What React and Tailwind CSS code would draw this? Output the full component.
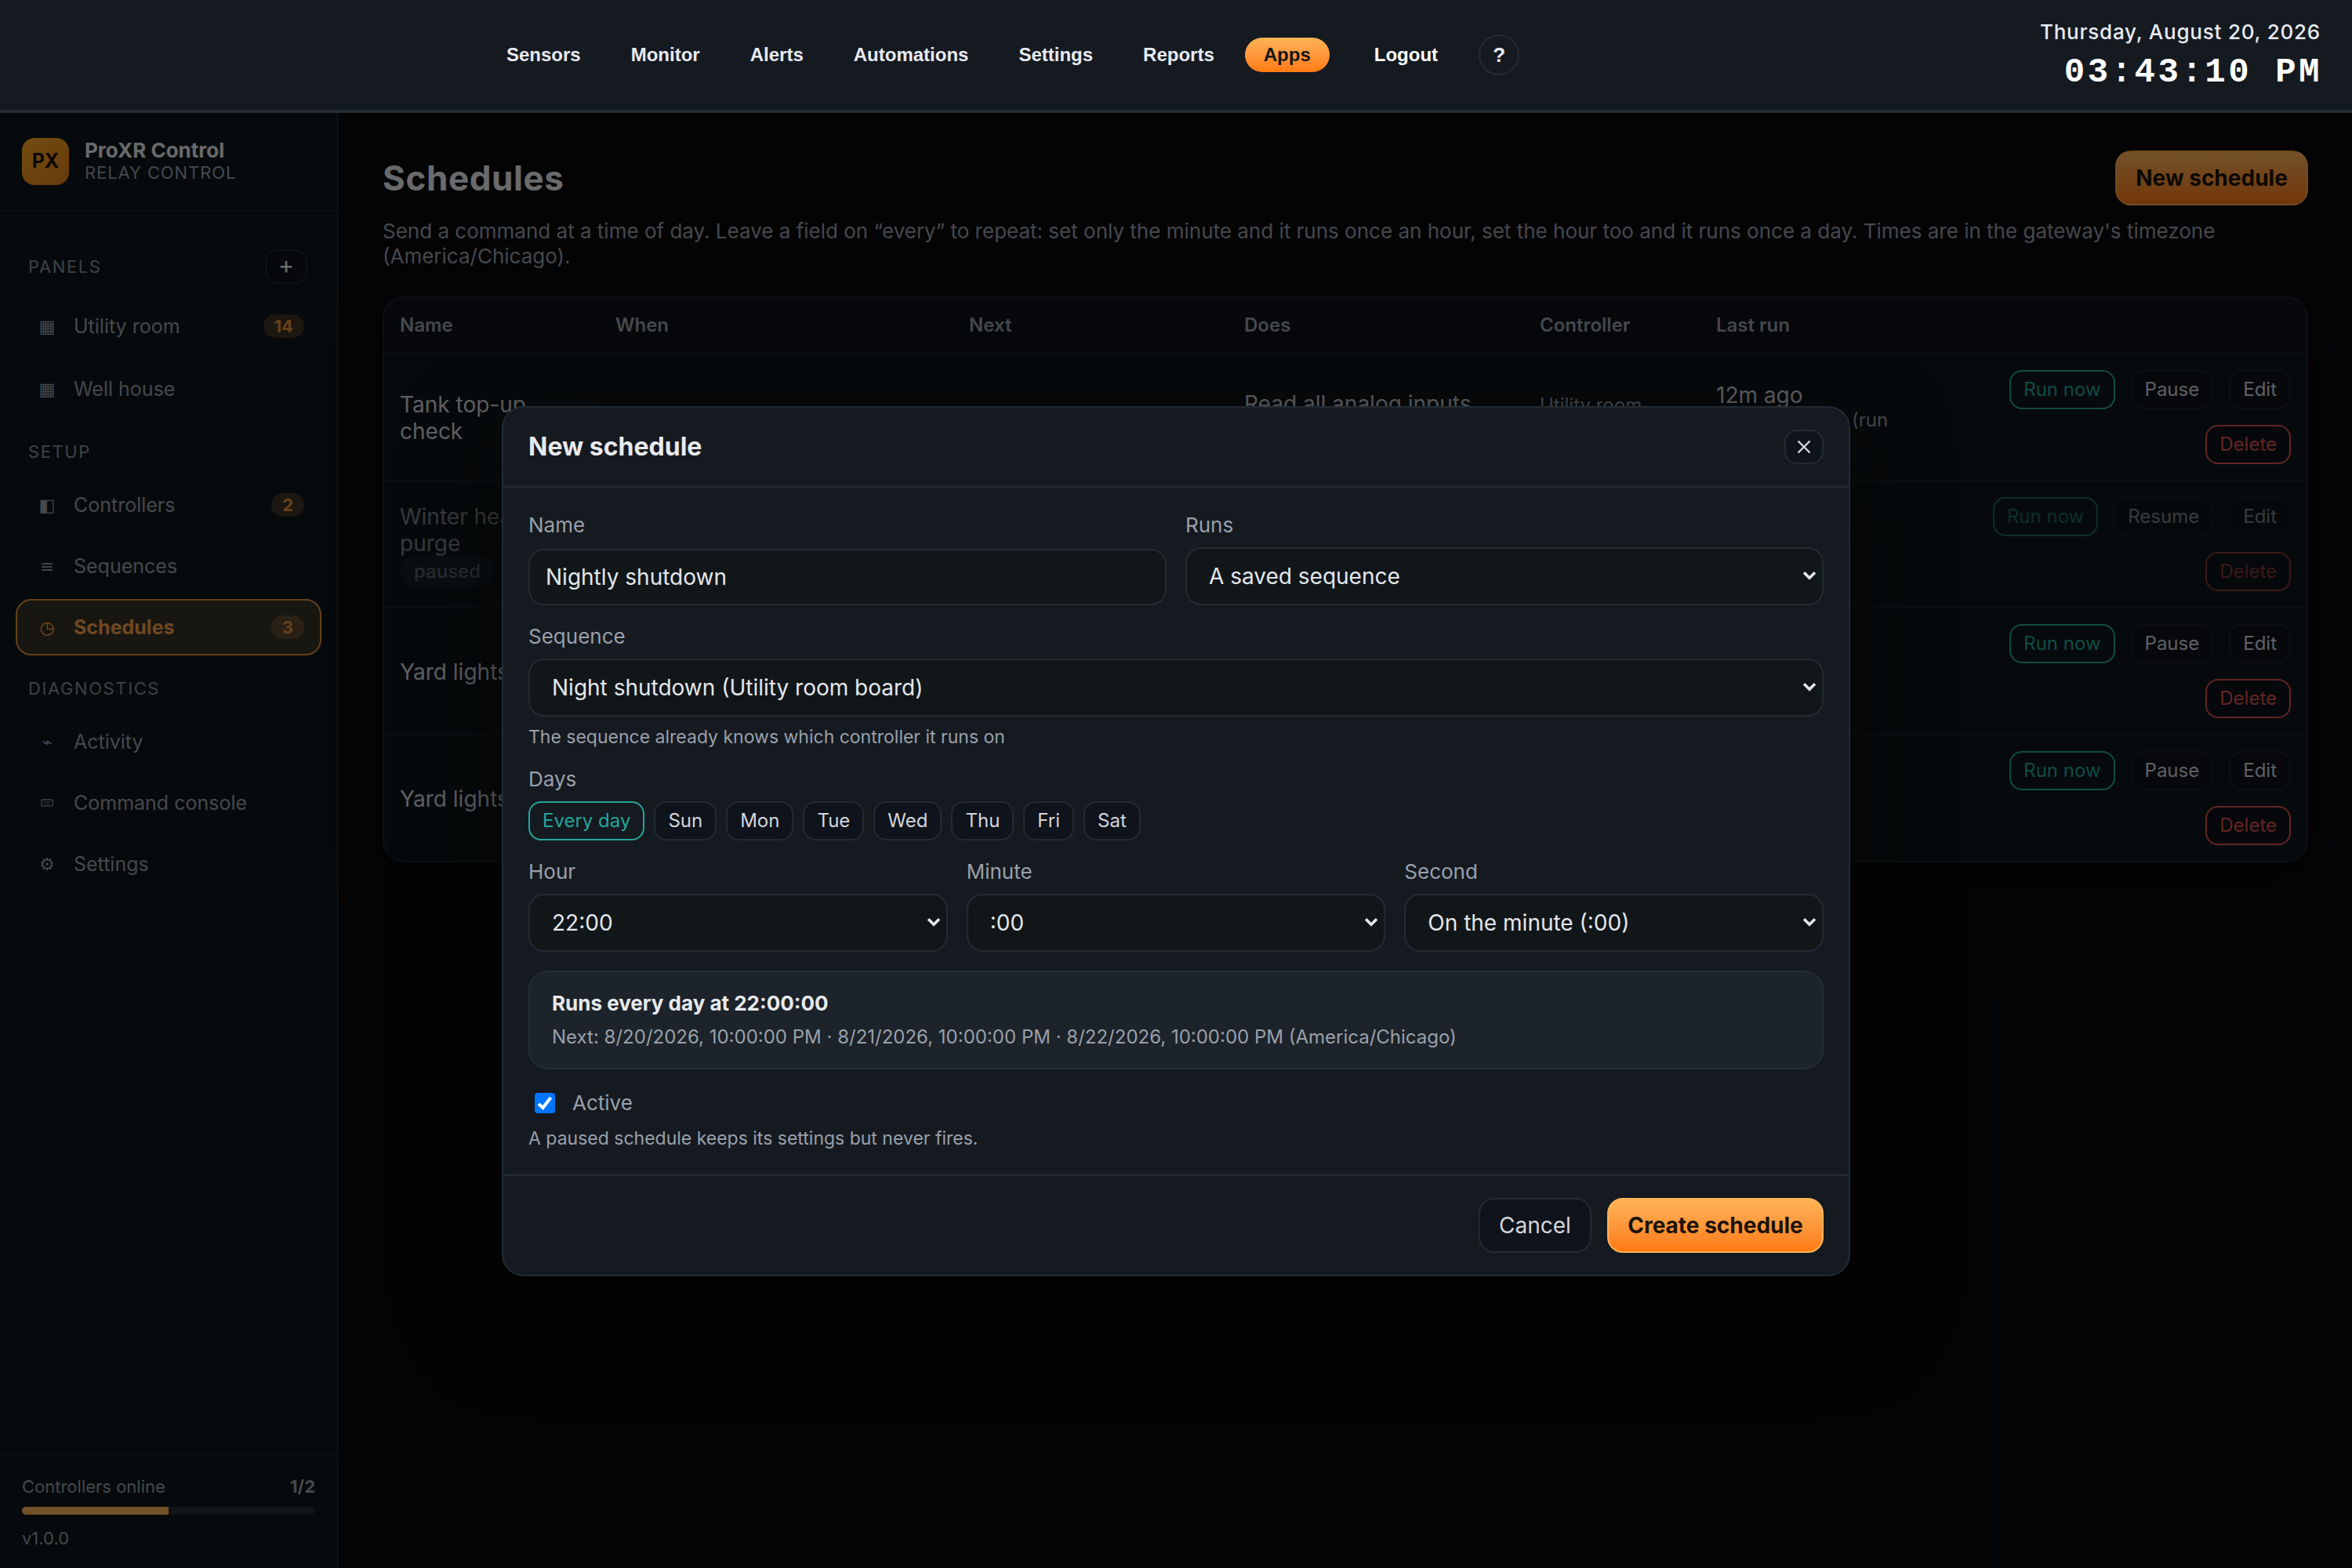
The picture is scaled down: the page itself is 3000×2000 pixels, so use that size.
import React, { useState } from 'react';
import clsx from 'clsx';

const navLinks = ['Sensors', 'Monitor', 'Alerts', 'Automations', 'Settings', 'Reports'];

const KeyboardIcon = () => (
  <svg width="16" height="10" viewBox="0 0 16 10" fill="none" stroke="currentColor" className="mx-auto opacity-80">
    <rect x="0.75" y="0.75" width="14.5" height="8.5" rx="2.5" strokeWidth="1.5" />
    <path d="M3 3.5H13M4.5 6.5H11.5" strokeWidth="1.4" strokeDasharray="1.6 0.8" />
  </svg>
);

const panelItems = [
  { icon: '▦', label: 'Utility room', count: 14 },
  { icon: '▦', label: 'Well house' },
];

const setupItems = [
  { icon: '◧', label: 'Controllers', count: 2 },
  { icon: '≡', label: 'Sequences' },
  { icon: '◷', label: 'Schedules', count: 3, active: true },
];

const diagnosticItems = [
  { icon: '⌁', label: 'Activity' },
  { icon: <KeyboardIcon />, label: 'Command console' },
  { icon: '⚙', label: 'Settings' },
];

const columns = ['Name', 'When', 'Next', 'Does', 'Controller', 'Last run', ''];

const schedules = [
  {
    name: 'Tank top-up check',
    does: 'Read all analog inputs',
    detail: 'bank 1',
    controller: 'Utility room board',
    lastRun: '12m ago',
    result: ['Completed ok', '(run', 'manually)'],
  },
  { name: 'Winter header purge', paused: true },
  { name: 'Yard lights off' },
  { name: 'Yard lights on' },
];

const dayNames = ['Every day', 'Sun', 'Mon', 'Tue', 'Wed', 'Thu', 'Fri', 'Sat'];

const TopBar = () => (
  <header className="flex h-[144px] shrink-0 items-start justify-between border-b-4 border-[#222d35] bg-[#151a21] pl-[622px] pr-[40px]">
    <nav className="mt-[44px] flex h-[52px] items-center gap-4 font-['Liberation_Sans',sans-serif] text-[24px] font-bold text-[#e8eaf2]">
      {navLinks.map((link) => (
        <a key={link} className="px-6">{link}</a>
      ))}
      <a className="-ml-px flex h-[44px] items-center rounded-full bg-linear-to-b from-[#ffb357] to-[#ff7a0f] px-6 text-[#14161a]">Apps</a>
      <a className="ml-[17px] px-6 text-white">Logout</a>
      <button className="ml-3 flex size-[52px] items-center justify-center rounded-full border-2 border-[#222b33] text-[26px] font-bold">?</button>
    </nav>
    <div className="flex flex-col items-end pt-[24px] text-right">
      <div className="text-[26px] leading-[34px] font-medium tracking-[0.78px] text-[#e8eaf2]">Thursday, August 20, 2026</div>
      <div className="-mr-[2px] mt-[9px] font-['Courier_New','Liberation_Mono',monospace] text-[44px] leading-[50px] font-bold tracking-[3.52px] text-white">03:43:10 PM</div>
    </div>
  </header>
);

const NavItem = ({ item, tall }) => (
  <div
    className={clsx(
      'flex items-center rounded-[20px] border-2 pr-[20px] pl-[24px] text-[25px]',
      tall ? 'h-[74px]' : 'h-[72px]',
      item.active ? 'border-[#e0913f] bg-[#353127] font-bold text-[#f5a04a]' : 'border-transparent text-[#9aa0aa]'
    )}
  >
    <span className="w-[28px] text-center text-[22px] font-normal">{item.icon}</span>
    <span className="ml-[20px] flex-1 pt-[2px]">{item.label}</span>
    {item.count && (
      <span className="rounded-full bg-[#ffa94d]/20 px-[14px] text-[22px] leading-[30px] font-bold text-[#e0913f]">{item.count}</span>
    )}
  </div>
);

const SectionLabel = ({ children }) => (
  <div className="pl-[16px] text-[22px] leading-[28px] tracking-[1.6px] text-[#8c929c]">{children}</div>
);

const Sidebar = () => (
  <aside className="flex w-[432px] shrink-0 flex-col border-r-2 border-[#1c242a] bg-[#0f171b]">
    <div className="flex h-[126px] items-center gap-[20px] border-b-2 border-[#1c242a] px-[28px]">
      <div className="flex size-[60px] items-center justify-center rounded-[16px] bg-linear-to-br from-[#fbab28] to-[#e8801a] text-[25px] font-bold text-[#1c1206]">PX</div>
      <div className="-mt-[2px]">
        <div className="text-[26px] leading-[30px] font-bold text-[#e8eaee]">ProXR Control</div>
        <div className="text-[22px] leading-[27px] tracking-[0.9px] text-[#9aa0aa]">RELAY CONTROL</div>
      </div>
    </div>

    <nav className="flex flex-1 flex-col px-[20px] pt-[48px]">
      <div className="flex h-[44px] items-center justify-between pr-[18px]">
        <SectionLabel>PANELS</SectionLabel>
        <button className="flex h-[44px] w-[54px] items-center justify-center rounded-[16px] border-2 border-[#222b33] bg-[#0f131b] pb-[5px] text-[31px] leading-none text-[#e8eaee]">+</button>
      </div>
      <div className="mt-[17px] flex flex-col gap-[6px]">
        {panelItems.map((item) => <NavItem key={item.label} item={item} tall />)}
      </div>
      <div className="pt-[29px] pb-[18px]"><SectionLabel>SETUP</SectionLabel></div>
      <div className="flex flex-col gap-[6px]">
        {setupItems.map((item) => <NavItem key={item.label} item={item} />)}
      </div>
      <div className="pt-[28px] pb-[18px]"><SectionLabel>DIAGNOSTICS</SectionLabel></div>
      <div className="flex flex-col gap-[6px]">
        {diagnosticItems.map((item) => <NavItem key={item.label} item={item} />)}
      </div>
    </nav>

    <div className="h-[144px] border-t-2 border-[#1c242a] px-[28px] pt-[23px] text-[22px] leading-[30px] text-[#9aa0aa]">
      <div className="flex justify-between">
        <span>Controllers online</span>
        <b>1/2</b>
      </div>
      <div className="mt-[11px] h-[10px] overflow-hidden rounded-full bg-[#252b33]">
        <div className="h-full w-1/2 bg-[#ffb357]" />
      </div>
      <div className="mt-[15px]">v1.0.0</div>
    </div>
  </aside>
);

const SmallButton = ({ tone, children }) => (
  <button
    className={clsx(
      'h-[50px] rounded-[16px] border-2 px-[16px] text-[24px]',
      tone === 'run' && 'border-[#26a69a] text-[#26a69a]',
      tone === 'danger' && 'border-[#d9534f] bg-[#0f131b] text-[#d9534f]',
      !tone && 'border-[#1c242c] bg-[#0f131b] text-[#d3d6dd]'
    )}
  >
    {children}
  </button>
);

const ScheduleRow = ({ row }) => (
  <div className="border-b-2 border-[#1c242a] last:border-b-0">
    <div
      className={clsx(
        'grid h-[160px] grid-cols-[275px_451px_351px_377px_225px_300px_1fr] items-center text-[28px] leading-[34px] text-[#d3d6dd]',
        row.paused && 'opacity-55'
      )}
    >
      <div className="px-[20px] pt-[2px]">
        {row.name}
        {row.paused && (
          <div className="w-fit rounded-full bg-[#222830] px-[18px] text-[24px] leading-[38px] font-medium text-[#9aa0aa]">paused</div>
        )}
      </div>
      <div />
      <div />
      <div className="px-[20px]">
        {row.does}
        <div>{row.detail}</div>
      </div>
      <div className="px-[20px] text-[24px] leading-[30px] text-[#9aa0aa]">{row.controller}</div>
      <div className="px-[20px] pt-[4px]">
        {row.lastRun}
        {row.result && (
          <div className="text-[24px] leading-[30px] text-[#9aa0aa]">
            <span className="inline-block w-[173px]">{row.result[0]}</span>
            {row.result[1]}
            <div>{row.result[2]}</div>
          </div>
        )}
      </div>
      <div className="flex flex-wrap justify-end gap-[20px] pr-[20px]">
        <SmallButton tone="run">Run now</SmallButton>
        <SmallButton>{row.paused ? 'Resume' : 'Pause'}</SmallButton>
        <SmallButton>Edit</SmallButton>
        <SmallButton tone="danger">Delete</SmallButton>
      </div>
    </div>
  </div>
);

const SchedulesPage = () => (
  <main className="flex-1 px-[56px] pt-[48px]">
    <div className="flex h-[70px] items-center justify-between">
      <h1 className="text-[44px] font-bold tracking-[0.6px] text-[#e8eaee]">Schedules</h1>
      <button className="h-[70px] w-[246px] rounded-[20px] border-2 border-[#ffb357]/60 bg-linear-to-b from-[#ffb357] to-[#ff7a0f] text-[28px] font-[650] text-[#1c1206]">New schedule</button>
    </div>
    <p className="mt-[17px] text-[26px] leading-[32px] text-[#9aa0aa]">
      Send a command at a time of day. Leave a field on “every” to repeat: set only the minute and it runs once an hour, set the hour too and it runs once a day. Times are in the gateway's timezone (America/Chicago).
    </p>
    <div className="mt-[35px] overflow-hidden rounded-[28px] border-2 border-[#1c242a] bg-[#10181c] shadow-[0_20px_60px_rgba(0,0,0,0.45)]">
      <div className="grid h-[72px] grid-cols-[275px_451px_351px_377px_225px_300px_1fr] items-center border-b-2 border-[#1c242a] bg-[#0f121a] text-[24px] font-semibold text-[#9aa0aa]">
        {columns.map((name) => <div key={name} className="px-[20px]">{name}</div>)}
      </div>
      {schedules.map((row) => <ScheduleRow key={row.name} row={row} />)}
    </div>
  </main>
);

const Label = ({ children }) => <div className="text-[26px] leading-[32px] text-[#9aa0aa]">{children}</div>;

const Hint = ({ children }) => <div className="text-[23px] leading-[28px] text-[#9aa0aa]">{children}</div>;

const SelectField = ({ label, value }) => (
  <div className="flex flex-col gap-3">
    <Label>{label}</Label>
    <div className="flex h-[74px] items-center justify-between rounded-[20px] border-2 border-[#222b33] bg-[#111619] pr-[7px] pl-[28px] text-[28px] text-[#e4e7ec]">
      <span>{value}</span>
      <svg width="18" height="14" viewBox="0 0 18 14" fill="none" className="mb-[3px]">
        <path d="M2 3.2L9 10.2L16 3.2" stroke="#e4e7ec" strokeWidth="3.6" />
      </svg>
    </div>
  </div>
);

const ScheduleModal = () => {
  const [name, setName] = useState('Nightly shutdown');
  const [day, setDay] = useState('Every day');

  return (
    <div className="mt-[2px] w-[1720px] rounded-[28px] border-2 border-[#222b33] bg-[#151a21] shadow-[0_40px_120px_rgba(0,0,0,0.6)]">
      <div className="flex h-[102px] items-center justify-between border-b-2 border-[#222b33] px-[32px]">
        <h2 className="text-[32px] font-bold text-[#e8eaee]">New schedule</h2>
        <button className="flex h-[44px] w-[50px] items-center justify-center rounded-[16px] border-2 border-[#222b33] bg-[#0f131b]">
          <svg width="18" height="18" viewBox="0 0 18 18" fill="none">
            <path d="M1.5 1.5L16.5 16.5M16.5 1.5L1.5 16.5" stroke="#d3d6dd" strokeWidth="2.4" />
          </svg>
        </button>
      </div>

      <div className="flex flex-col gap-6 p-[32px]">
        <div className="grid grid-cols-2 gap-6">
          <div className="flex flex-col justify-between">
            <Label>Name</Label>
            <input
              value={name}
              onChange={(e) => setName(e.target.value)}
              className="h-[72px] rounded-[20px] border-2 border-[#222b33] bg-[#111619] px-[20px] text-[28px] text-[#e4e7ec]"
            />
          </div>
          <SelectField label="Runs" value="A saved sequence" />
        </div>

        <div className="flex flex-col gap-3">
          <SelectField label="Sequence" value="Night shutdown (Utility room board)" />
          <Hint>The sequence already knows which controller it runs on</Hint>
        </div>

        <div className="flex flex-col gap-3">
          <Label>Days</Label>
          <div className="flex gap-3">
            {dayNames.map((d) => (
              <button
                key={d}
                onClick={() => setDay(d)}
                className={clsx(
                  'h-[50px] rounded-[16px] border-2 px-[16px] text-[24px]',
                  d === day ? 'border-[#26a69a] text-[#26a69a]' : 'border-[#222b33] bg-[#0f131b] text-[#d3d6dd]'
                )}
              >
                {d}
              </button>
            ))}
          </div>
        </div>

        <div className="grid grid-cols-3 gap-6">
          <SelectField label="Hour" value="22:00" />
          <SelectField label="Minute" value=":00" />
          <SelectField label="Second" value="On the minute (:00)" />
        </div>

        <div className="flex h-[126px] flex-col justify-center gap-[11px] rounded-[24px] border-2 border-[#222d33] bg-[#1c232a] px-[28px]">
          <div className="text-[26px] leading-[32px] font-bold text-[#e8eaee]">Runs every day at 22:00:00</div>
          <div className="text-[24px] leading-[32px] text-[#9aa0aa]">
            Next: 8/20/2026, 10:00:00 PM · 8/21/2026, 10:00:00 PM · 8/22/2026, 10:00:00 PM (America/Chicago)
          </div>
        </div>

        <div className="flex flex-col gap-3">
          <div className="flex h-[38px] items-center gap-[22px] pl-[8px]">
            <span className="flex size-[26px] items-center justify-center rounded-[4px] bg-[#0075ff]">
              <svg width="26" height="26" viewBox="0 0 26 26" fill="none">
                <path d="M5 14L10.5 19L20.5 6" stroke="#ffffff" strokeWidth="4" />
              </svg>
            </span>
            <Label>Active</Label>
          </div>
          <Hint>A paused schedule keeps its settings but never fires.</Hint>
        </div>
      </div>

      <div className="flex h-[128px] items-center justify-end gap-[20px] border-t-2 border-[#222b33] px-[32px]">
        <button className="h-[70px] w-[144px] rounded-[20px] border-2 border-[#222b33] bg-[#0f131b] text-[28px] text-[#d3d6dd]">Cancel</button>
        <button className="h-[70px] w-[276px] rounded-[20px] border-2 border-[#ffb357] bg-linear-to-b from-[#ffb357] to-[#ff7a0f] text-[28px] font-[650] text-[#1c1206]">Create schedule</button>
      </div>
    </div>
  );
};

const App = () => (
  <div className="flex h-[2000px] w-[3000px] flex-col overflow-hidden bg-[#090b0d] font-[Inter,'DejaVu_Sans',sans-serif]">
    <TopBar />
    <div className="relative flex flex-1">
      <Sidebar />
      <SchedulesPage />
      <div className="absolute inset-0 flex items-center justify-center bg-black/55">
        <ScheduleModal />
      </div>
    </div>
  </div>
);

export default App;
